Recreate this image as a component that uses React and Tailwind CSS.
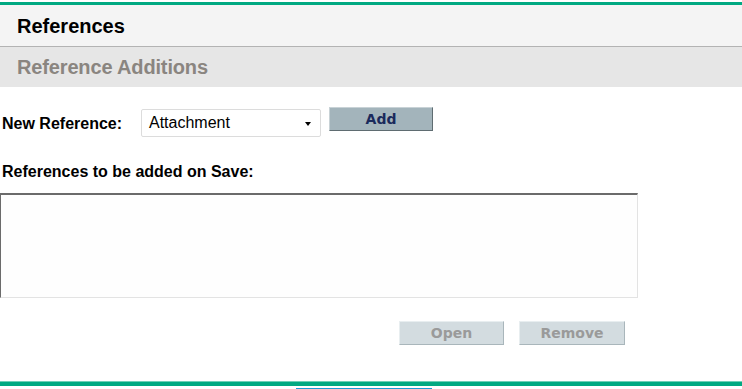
export default function App() {
  const arial = { fontFamily: '"Liberation Sans", Arial, sans-serif' };
  const dv = { fontFamily: '"DejaVu Sans", Verdana, sans-serif' };
  return (
    <div className="w-[742px] h-[389px] bg-white relative overflow-hidden" style={arial}>
      <div className="h-[2px]" />
      <div className="h-[3px] bg-[#01a982]" />
      <div className="h-[42px] bg-[#f4f4f4] border-b border-[#b3b3b3] flex items-center pl-[17px]">
        <span className="text-[20px] font-bold text-black leading-none">References</span>
      </div>
      <div className="h-[40px] bg-[#e6e6e6] flex items-center pl-[17px]">
        <span className="text-[20px] font-bold text-[#8a8580] leading-none tracking-[-0.15px]">Reference Additions</span>
      </div>
      <div className="flex items-start mt-[22px]">
        <span className="ml-[2px] mt-[5px] w-[139px] text-[16px] font-bold text-black leading-[20px]">New Reference:</span>
        <div className="w-[180px] h-[28px] border border-[#dcdcdc] rounded-[2px] bg-white flex items-center justify-between pl-[7px] pr-[9px]">
          <span className="text-[16px] text-black leading-none">Attachment</span>
          <span className="w-0 h-0 border-l-[3.5px] border-r-[3.5px] border-t-[4px] border-l-transparent border-r-transparent border-t-black mt-[2px]" />
        </div>
        <div className="ml-[8px] -mt-[2px] w-[104px] h-[24px] bg-[#a3b4bb] border border-t-[#c8d2d6] border-l-[#c8d2d6] border-r-[#5f6c71] border-b-[#5f6c71] flex items-center justify-center">
          <span className="text-[14px] font-bold text-[#1a2a5c] leading-none" style={dv}>Add</span>
        </div>
      </div>
      <div className="mt-[25px] ml-[2px] text-[16px] font-bold text-black leading-[20px]">References to be added on Save:</div>
      <div className="mt-[11px] w-[638px] h-[105px] border-t-2 border-l border-t-[#6b6b6b] border-l-[#6b6b6b] border-r border-b border-r-[#e3e3e3] border-b-[#e3e3e3] bg-[#fefefe]" />
      <div className="flex mt-[23px] ml-[399px] gap-[15px]">
        <div className="w-[105px] h-[24px] bg-[#d3dce0] border border-t-[#e8eef0] border-l-[#e8eef0] border-r-[#a9b6bb] border-b-[#a9b6bb] flex items-center justify-center">
          <span className="text-[14px] font-bold text-[#9a9a9a] leading-none" style={dv}>Open</span>
        </div>
        <div className="w-[106px] h-[24px] bg-[#d3dce0] border border-t-[#e8eef0] border-l-[#e8eef0] border-r-[#a9b6bb] border-b-[#a9b6bb] flex items-center justify-center">
          <span className="text-[14px] font-bold text-[#9a9a9a] leading-none" style={dv}>Remove</span>
        </div>
      </div>
      <div className="absolute left-0 right-0 top-[381px] h-[1px] bg-[#6fcfb6]" />
      <div className="absolute left-0 right-0 top-[382px] h-[4px] bg-[#01a982]" />
      <div className="absolute left-[296px] w-[136px] top-[388px] h-[1px] bg-[#1a9ad6]" />
    </div>
  );
}
